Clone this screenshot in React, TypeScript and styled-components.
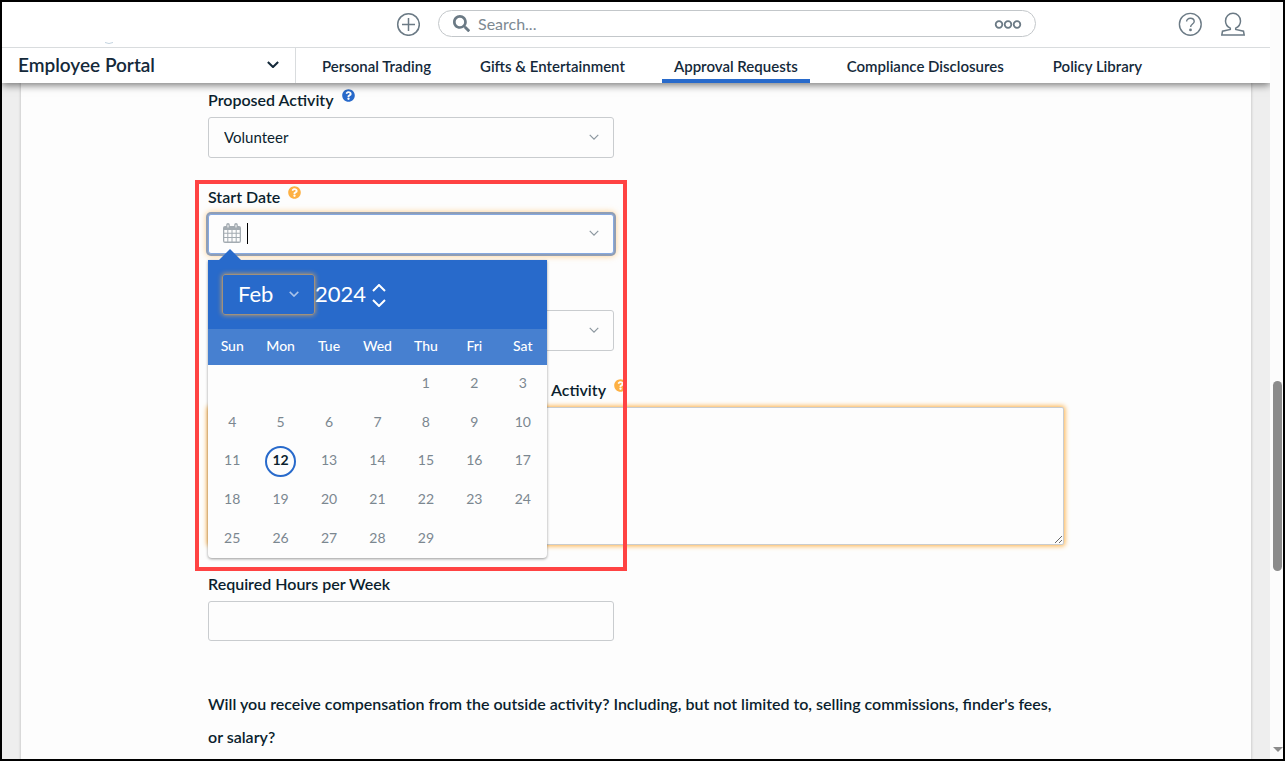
import React from "react";
import styled, { createGlobalStyle, css } from "styled-components";
import { FaQuestionCircle, FaSearch } from "react-icons/fa";

const color = {
  ink: "#0b1f2e",
  navInk: "#14293a",
  muted: "#6b7a85",
  day: "#7b8790",
  line: "#c9cccf",
  blue: "#286acb",
  blueSoft: "#4780d0",
  orange: "#fdb043",
  surface: "#fdfdfd",
};

const GlobalStyle = createGlobalStyle`
  * { box-sizing: border-box; }
  body {
    margin: 0;
    font-family: Lato, "Open Sans", sans-serif;
    font-size: 16px;
    color: ${color.ink};
    background: #fff;
  }
  button, input, select, textarea { font: inherit; color: inherit; }
`;

const Shell = styled.div`
  display: flex;
  height: 100vh;
  border: 2px solid #000;
  background: ${color.surface};
  overflow: hidden;
`;

const Column = styled.div`
  flex: 1;
  min-width: 0;
  display: flex;
  flex-direction: column;
  overflow: hidden;
  background: #eee;
`;

const Header = styled.header`
  position: relative;
  z-index: 5;
  background: #fff;
  box-shadow: 0 2px 8px rgba(0, 0, 0, 0.55);
`;

const TopBar = styled.div`
  display: flex;
  align-items: center;
  height: 46px;
  padding: 0 25px 2px 0;
  border-bottom: 1px solid #d9dcde;
`;

const Brand = styled.div`
  display: flex;
  align-self: flex-end;
  justify-content: center;
  flex: 0 1 394px;
  padding-right: 180px;
`;

const IconButton = styled.button`
  display: flex;
  padding: 0;
  border: 0;
  background: none;
  color: ${color.muted};
`;

const SearchBox = styled.label`
  flex: 1;
  display: flex;
  align-items: center;
  gap: 8px;
  height: 27px;
  margin: 0 142px 0 18px;
  padding: 0 13px 0 14px;
  border: 1px solid #c3c7ca;
  border-radius: 14px;
  color: ${color.muted};
`;

const SearchInput = styled.input`
  flex: 1;
  min-width: 0;
  padding: 0;
  border: 0;
  outline: 0;
  background: none;
  &::placeholder { color: #7c8992; opacity: 1; }
`;

const TopActions = styled.div`
  display: flex;
  gap: 19px;
`;

const NavBar = styled.div`
  display: flex;
  height: 35px;
`;

const PortalButton = styled.button`
  display: flex;
  align-items: center;
  justify-content: space-between;
  width: 294px;
  padding: 0 16px 2px;
  border: 0;
  border-right: 1px solid #d9dcde;
  background: none;
  font-size: 19px;
  font-weight: 600;
  color: ${color.navInk};
`;

const Nav = styled.nav`
  display: flex;
  gap: 25px;
  padding-left: 14px;
`;

const NavLink = styled.a<{ $active?: boolean }>`
  padding: 2px 12px 0;
  line-height: 32px;
  font-size: 15px;
  font-weight: 600;
  color: ${color.navInk};
  text-decoration: none;
  white-space: nowrap;
  ${(p) => p.$active && css`box-shadow: inset 0 -4px ${color.blue};`}
`;

const Main = styled.main`
  flex: 1;
  min-height: 0;
  overflow: hidden;
  padding: 0 19px;
`;

const Card = styled.div`
  min-height: 100%;
  background: ${color.surface};
  box-shadow: 0 0 2px 1px #cfcfcf;
`;

const Form = styled.form`
  display: flex;
  flex-direction: column;
  gap: 22px;
  max-width: 856px;
  margin: 0 auto;
`;

const Field = styled.div`
  position: relative;
`;

const LabelRow = styled.div`
  display: flex;
  gap: 8px;
  height: 34px;
`;

const Label = styled.label`
  line-height: 34px;
  font-weight: 600;
`;

const TrailingLabel = styled(Label)`
  width: 398px;
  text-align: right;
`;

const Help = styled.button<{ $tone: string }>`
  align-self: flex-start;
  display: flex;
  margin-top: 6px;
  padding: 0;
  border: 0;
  background: none;
  color: ${(p) => p.$tone};
`;

const Control = styled.div<{ $focused?: boolean }>`
  display: flex;
  align-items: center;
  width: 406px;
  max-width: 100%;
  height: 41px;
  padding: 0 14px 2px 15px;
  border: 1px solid ${color.line};
  border-radius: 3px;
  background: ${color.surface};
  font-size: 15px;
  ${(p) =>
    p.$focused &&
    css`
      height: 40px;
      padding-left: 14px;
      border-color: #86a9e0;
      box-shadow: 0 0 0 2px #8f9eb6, 0 0 6px 2px rgba(253, 176, 67, 0.6);
    `}
`;

const Select = styled.select`
  flex: 1;
  min-width: 0;
  height: 100%;
  padding: 0;
  border: 0;
  outline: 0;
  appearance: none;
  background: none;
`;

const Caret = styled.span`
  width: 1px;
  height: 21px;
  margin-left: 6px;
  background: #000;
`;

const DateInput = styled.input`
  flex: 1;
  min-width: 0;
  border: 0;
  outline: 0;
  background: none;
`;

const TextInput = styled.input`
  display: block;
  width: 406px;
  max-width: 100%;
  height: 40px;
  padding: 0 15px;
  border: 1px solid ${color.line};
  border-radius: 3px;
  background: ${color.surface};
`;

const TextArea = styled.textarea`
  display: block;
  width: 100%;
  height: 138px;
  padding: 10px 15px;
  border: 1px solid ${color.line};
  border-radius: 2px;
  outline: 0;
  resize: both;
  background: ${color.surface};
  box-shadow: 0 0 5px 1px ${color.orange};
`;

const Question = styled.p`
  margin: 24px 0 0;
  line-height: 33px;
  font-weight: 600;
`;

const Highlight = styled.div`
  position: absolute;
  z-index: 4;
  top: 0;
  left: -13px;
  width: 432px;
  height: 391px;
  border: 4px solid #ff4343;
  pointer-events: none;
`;

const Picker = styled.div`
  position: absolute;
  z-index: 3;
  top: 80px;
  left: 0;
  width: 339px;
  border-radius: 0 0 4px 4px;
  background: ${color.surface};
  box-shadow: 0 1px 3px rgba(0, 0, 0, 0.4);
  &::before {
    content: "";
    position: absolute;
    top: -11px;
    left: 11px;
    border: 11px solid transparent;
    border-top: 0;
    border-bottom-color: ${color.blue};
  }
`;

const PickerHead = styled.div`
  display: flex;
  align-items: center;
  height: 69px;
  padding: 0 14px;
  background: ${color.blue};
  color: #fff;
  font-size: 22px;
`;

const MonthBox = styled.div`
  display: flex;
  align-items: center;
  width: 93px;
  height: 41px;
  padding: 0 15px 2px;
  border: 1px solid #a1917c;
  border-radius: 3px;
  box-shadow: 0 0 5px rgba(253, 176, 67, 0.8);
`;

const YearInput = styled.input`
  width: 57px;
  padding: 0 0 3px;
  border: 0;
  outline: 0;
  background: none;
`;

const Spinner = styled.div`
  display: flex;
  flex-direction: column;
  gap: 7px;
  padding-top: 2px;
`;

const SpinButton = styled(IconButton)`
  color: #fff;
`;

const Days = styled.table`
  width: 100%;
  table-layout: fixed;
  border-collapse: collapse;
  text-align: center;
  th {
    height: 36px;
    padding: 0 0 3px;
    background: ${color.blueSoft};
    color: #fff;
    font-size: 14px;
    font-weight: 500;
  }
  td { padding: 0; }
`;

const DayRows = styled.tbody`
  height: 193px;
`;

const Day = styled.button<{ $today?: boolean }>`
  width: 31px;
  height: 31px;
  padding: 0 0 3px;
  border: 2px solid transparent;
  border-radius: 50%;
  background: none;
  font-size: 14px;
  color: ${color.day};
  ${(p) => p.$today && css`
    border-color: ${color.blue};
    color: ${color.ink};
    font-weight: 700;
  `}
`;

const ScrollTrack = styled.div`
  display: flex;
  flex-direction: column;
  align-items: center;
  justify-content: flex-end;
  width: 13px;
  padding-bottom: 7px;
  background: #fcfcfc;
`;

const ScrollThumb = styled.div`
  width: 9px;
  height: 190px;
  margin: auto 0 176px 2px;
  border-radius: 5px;
  background: #8b8b8b;
`;

const ScrollArrow = styled.div`
  margin-left: 2px;
  border: 5px solid transparent;
  border-bottom: 0;
  border-top-color: #8b8b8b;
`;

const Chevron = ({ size = 10, up = false, stroke = "#8c979f", weight = 1.2 }) => (
  <svg width={size} height={size / 2 + 1} viewBox="0 0 14 8" fill="none" stroke={stroke} strokeWidth={(weight * 14) / size} aria-hidden="true">
    <path d={up ? "M1 7l6-6 6 6" : "M1 1l6 6 6-6"} />
  </svg>
);

const PlusIcon = () => (
  <svg width="24" height="24" viewBox="0 0 24 24" fill="none" stroke="currentColor" strokeWidth="1.5">
    <circle cx="12.5" cy="12.5" r="10.8" />
    <path d="M12.500 6v13M6 12.500h13" />
  </svg>
);

const HelpIcon = () => (
  <svg width="24" height="24" viewBox="0 0 24 24" fill="none" stroke="currentColor" strokeWidth="1.4">
    <circle cx="12.300" cy="12.300" r="10.900" />
    <path d="M8.600 9.600c0-2 1.600-3.400 3.800-3.400s3.800 1.400 3.800 3.200c0 2.600-3.600 2.600-3.600 5.600" />
    <circle cx="12.500" cy="17.900" r="1.400" fill="currentColor" stroke="none" />
  </svg>
);

const UserIcon = () => (
  <svg width="24" height="24" viewBox="0 0 24 24" fill="none" stroke="currentColor" strokeWidth="1.5">
    <path d="M9.300 16.200C6.200 14.600 4.500 12.200 4.500 8.900a7.500 7.700 0 0 1 15 0c0 3.300-1.700 5.700-4.800 7.300v1.300l7.800 1.700.7 3.900H.8l.700-3.900 7.800-1.700z" />
  </svg>
);

const MoreIcon = () => (
  <svg width="28" height="10" viewBox="0 0 28 10" fill="none" stroke="currentColor" strokeWidth="1.800">
    <circle cx="5" cy="5.500" r="3.300" />
    <circle cx="14" cy="5.500" r="3.300" />
    <circle cx="23" cy="5.500" r="3.300" />
  </svg>
);

const CalendarIcon = () => (
  <svg width="18" height="20" viewBox="0 0 18 20" fill="#a3abb1" aria-hidden="true">
    <path
      fillRule="evenodd"
      d="M2 3h1.200V1.800a1.800 1.800 0 0 1 3.600 0V3h4.400V1.800a1.800 1.800 0 0 1 3.600 0V3H16a2 2 0 0 1 2 2v13a2 2 0 0 1-2 2H2a2 2 0 0 1-2-2V5a2 2 0 0 1 2-2zM1.300 7v2.700h3V7zm4 0v2.700h3.200V7zm4.200 0v2.700h3.200V7zm4.200 0v2.700h3V7zM1.300 10.700v3.200h3v-3.200zm4 0v3.200h3.200v-3.200zm4.200 0v3.200h3.200v-3.200zm4.200 0v3.200h3v-3.200zM1.300 14.900v3.700h3v-3.700zm4 0v3.700h3.200v-3.700zm4.200 0v3.700h3.200v-3.700zm4.200 0v3.700h3v-3.700zM4.500 1.800v2.700h1V1.800zm8 0v2.700h1V1.800z"
    />
  </svg>
);

const links = ["Personal Trading", "Gifts & Entertainment", "Approval Requests", "Compliance Disclosures", "Policy Library"];
const weekdays = ["Sun", "Mon", "Tue", "Wed", "Thu", "Fri", "Sat"];
const firstWeekday = 4;
const daysInMonth = 29;
const today = 12;
const weeks = Array.from({ length: 5 }, (_, w) =>
  weekdays.map((_, d) => {
    const day = w * 7 + d - firstWeekday + 1;
    return day > 0 && day <= daysInMonth ? day : null;
  })
);

const HelpTip = ({ tone }: { tone: string }) => (
  <Help type="button" $tone={tone} aria-label="Help">
    <FaQuestionCircle size={13} />
  </Help>
);

const DatePicker = () => (
  <Picker>
    <PickerHead>
      <MonthBox>
        <Select aria-label="Month" defaultValue="Feb">
          <option>Feb</option>
        </Select>
        <Chevron stroke="#a9c3ea" weight={1.5} />
      </MonthBox>
      <YearInput aria-label="Year" defaultValue="2024" />
      <Spinner>
        <SpinButton type="button" aria-label="Next year"><Chevron size={14} up stroke="#fff" weight={2} /></SpinButton>
        <SpinButton type="button" aria-label="Previous year"><Chevron size={14} stroke="#fff" weight={2} /></SpinButton>
      </Spinner>
    </PickerHead>
    <Days>
      <thead>
        <tr>{weekdays.map((d) => <th key={d} scope="col">{d}</th>)}</tr>
      </thead>
      <DayRows>
        {weeks.map((week, w) => (
          <tr key={w}>
            {week.map((day, d) => (
              <td key={d}>{day && <Day type="button" $today={day === today}>{day}</Day>}</td>
            ))}
          </tr>
        ))}
      </DayRows>
    </Days>
  </Picker>
);

export default function App() {
  return (
    <>
      <GlobalStyle />
      <Shell>
        <Column>
          <Header>
            <TopBar>
              <Brand>
                <svg width="10" height="3" viewBox="0 0 10 3" fill="none" stroke="#c3d3df" aria-hidden="true">
                  <path d="M1 .5q4 2 8 0" />
                </svg>
              </Brand>
              <IconButton type="button" aria-label="Add"><PlusIcon /></IconButton>
              <SearchBox>
                <FaSearch size={17} aria-hidden="true" />
                <SearchInput aria-label="Search" placeholder="Search..." />
                <MoreIcon />
              </SearchBox>
              <TopActions>
                <IconButton type="button" aria-label="Help"><HelpIcon /></IconButton>
                <IconButton type="button" aria-label="Account"><UserIcon /></IconButton>
              </TopActions>
            </TopBar>
            <NavBar>
              <PortalButton type="button">
                Employee Portal
                <Chevron size={12} stroke={color.navInk} weight={2} />
              </PortalButton>
              <Nav>
                {links.map((l) => (
                  <NavLink key={l} href="#" $active={l === "Approval Requests"}>{l}</NavLink>
                ))}
              </Nav>
            </NavBar>
          </Header>
          <Main>
            <Card>
              <Form>
                <Field>
                  <LabelRow>
                    <Label htmlFor="activity">Proposed Activity</Label>
                    <HelpTip tone={color.blue} />
                  </LabelRow>
                  <Control>
                    <Select id="activity" defaultValue="Volunteer"><option>Volunteer</option></Select>
                    <Chevron />
                  </Control>
                </Field>
                <Field>
                  <LabelRow>
                    <Label htmlFor="start">Start Date</Label>
                    <HelpTip tone={color.orange} />
                  </LabelRow>
                  <Control $focused>
                    <CalendarIcon />
                    <Caret />
                    <DateInput id="start" type="text" />
                    <Chevron />
                  </Control>
                  <DatePicker />
                  <Highlight />
                </Field>
                <Field>
                  <LabelRow />
                  <Control>
                    <Select aria-label="End date" />
                    <Chevron />
                  </Control>
                </Field>
                <Field>
                  <LabelRow>
                    <TrailingLabel htmlFor="describe">Activity</TrailingLabel>
                    <HelpTip tone={color.orange} />
                  </LabelRow>
                  <TextArea id="describe" />
                </Field>
                <Field>
                  <LabelRow>
                    <Label htmlFor="hours">Required Hours per Week</Label>
                  </LabelRow>
                  <TextInput id="hours" />
                </Field>
                <Question>
                  Will you receive compensation from the outside activity? Including, but not limited to, selling commissions, finder's fees, or salary?
                </Question>
              </Form>
            </Card>
          </Main>
        </Column>
        <ScrollTrack>
          <ScrollThumb />
          <ScrollArrow />
        </ScrollTrack>
      </Shell>
    </>
  );
}
